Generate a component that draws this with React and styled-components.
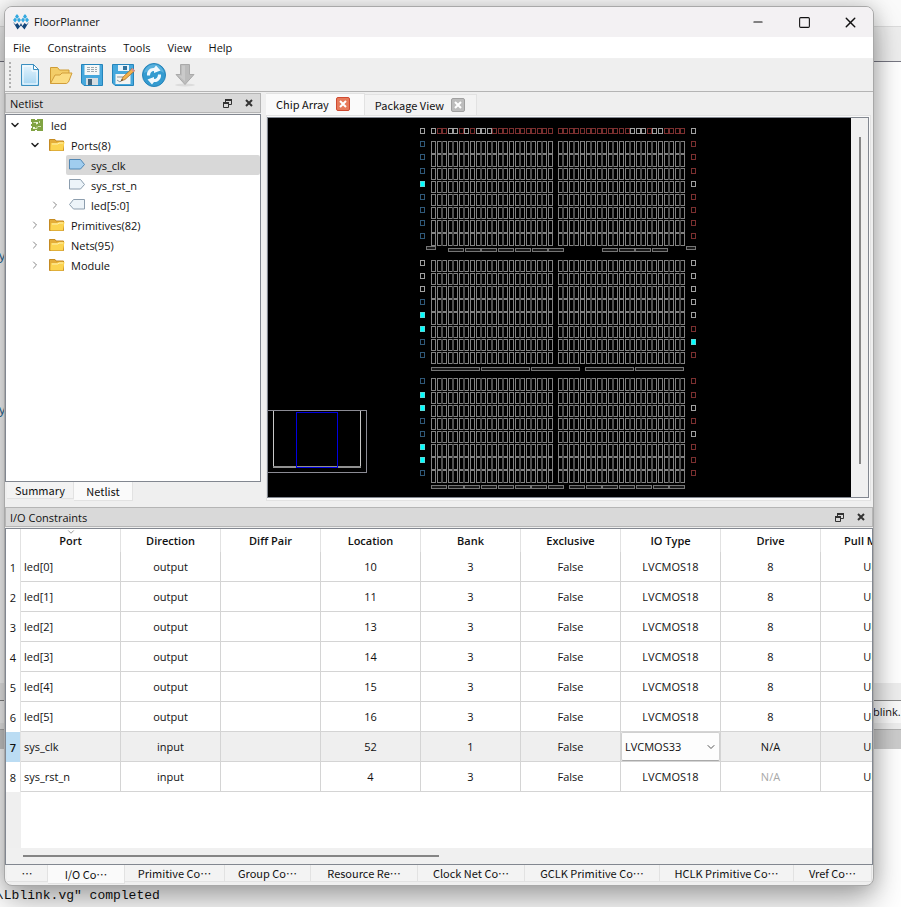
import React, { useState } from 'react'
import styled, { createGlobalStyle } from 'styled-components'
import { ChevronDown, ChevronRight, Minus, Square, X } from 'lucide-react'


const MENUS = ['File', 'Constraints', 'Tools', 'View', 'Help']

const TREE = [
  { label: 'led', depth: 0, open: true, icon: 'chip' },
  { label: 'Ports(8)', depth: 1, open: true, icon: 'folder' },
  { label: 'sys_clk', depth: 2, icon: 'input', filled: true, selected: true },
  { label: 'sys_rst_n', depth: 2, icon: 'input' },
  { label: 'led[5:0]', depth: 2, open: false, icon: 'output' },
  { label: 'Primitives(82)', depth: 1, open: false, icon: 'folder' },
  { label: 'Nets(95)', depth: 1, open: false, icon: 'folder' },
  { label: 'Module', depth: 1, open: false, icon: 'folder' },
]

const COLUMNS = ['Port', 'Direction', 'Diff Pair', 'Location', 'Bank', 'Exclusive', 'IO Type', 'Drive', 'Pull Mode']

const ROWS = [
  ['led[0]', 'output', '', '10', '3', 'False', 'LVCMOS18', '8', 'UP'],
  ['led[1]', 'output', '', '11', '3', 'False', 'LVCMOS18', '8', 'UP'],
  ['led[2]', 'output', '', '13', '3', 'False', 'LVCMOS18', '8', 'UP'],
  ['led[3]', 'output', '', '14', '3', 'False', 'LVCMOS18', '8', 'UP'],
  ['led[4]', 'output', '', '15', '3', 'False', 'LVCMOS18', '8', 'UP'],
  ['led[5]', 'output', '', '16', '3', 'False', 'LVCMOS18', '8', 'UP'],
  ['sys_clk', 'input', '', '52', '1', 'False', 'LVCMOS33', 'N/A', 'UP'],
  ['sys_rst_n', 'input', '', '4', '3', 'False', 'LVCMOS18', 'N/A', 'UP'],
]

// labels are elided, each one is drawn with a trailing ellipsis
const BOTTOM_TABS = [
  { label: '', width: 41 },
  { label: 'I/O Co', width: 77 },
  { label: 'Primitive Co', width: 100 },
  { label: 'Group Co', width: 86 },
  { label: 'Resource Re', width: 107 },
  { label: 'Clock Net Co', width: 107 },
  { label: 'GCLK Primitive Co', width: 135 },
  { label: 'HCLK Primitive Co', width: 134 },
  { label: 'Vref Co', width: 78 },
]

// device geometry, in canvas units
const COL_PITCH = 5.57
const ROW_PITCH = 13.15
const BLOCK_TOPS = [141.2, 259.8, 378.4]
const HALVES = [{ x: 431, cols: 22 }, { x: 557.7, cols: 23 }]

// g = free, r = reserved, b = bonded, c = placed
const PAD_COLORS = { g: '#a0a0a0', r: '#7a2f2f', b: '#2f5878', c: '#00ffff' }
const TOP_PADS = ['grrggrgrgggrrrrrrrrrrr', 'rrrrrrrrrrrrrgggrggrrrr']
const LEFT_PADS = ['bbbcbbbb', 'gggbccbb', 'bccbbccb']
const RIGHT_PADS = ['rrrgrrrr', 'gggggrcr', 'rrgrgrrr']

const BARS = [
  { x: 426, y: 246, w: 10, n: 1 },
  { x: 448, y: 248, w: 16, n: 7 },
  { x: 602, y: 248, w: 16, n: 4 },
  { x: 686, y: 246, w: 10, n: 1 },
  { x: 431, y: 367, w: 49, n: 3 },
  { x: 585, y: 367, w: 49, n: 2 },
  { x: 431, y: 485, w: 16, n: 8 },
  { x: 569, y: 485, w: 16, n: 7 },
]


const Pad = ({ x, y, type }) => (
  <rect
    x={x + 0.5}
    y={y + 0.5}
    width="4"
    height="5"
    fill={type === 'c' ? PAD_COLORS.c : '#000'}
    stroke={type === 'c' ? '#58d8d8' : PAD_COLORS[type]}
  />
)

const CellBlock = ({ left, cols, top }) => {
  const xs = Array.from({ length: cols }, (_, i) => Math.round(left + i * COL_PITCH))
  const ys = Array.from({ length: 8 }, (_, i) => top + i * ROW_PITCH)

  return (
    <g>
      {ys.map((y) => {
        const y0 = Math.round(y)
        const y1 = Math.round(y + 12.4)
        return xs.map((x, i) => (
          <g key={`${x}-${y0}`}>
            <rect x={x + 0.5} y={y0 + 0.5} width="4" height={y1 - y0 - 1} fill="none" stroke="#828282" />
            {/* cells that touch share a dimmer edge */}
            {xs[i - 1] === x - 5 && <rect x={x - 1} y={y0} width="2" height={y1 - y0} fill="#505050" />}
          </g>
        ))
      })}
    </g>
  )
}

const ChipDrawing = () => (
  <ChipSvg viewBox="268 118 583 379" role="img" aria-label="Chip array">
    {TOP_PADS.map((pads, h) =>
      pads.split('').map((type, i) => (
        <Pad key={`${h}-${i}`} x={Math.round(HALVES[h].x + i * COL_PITCH)} y={128} type={type} />
      ))
    )}
    <Pad x={420} y={128} type="g" />
    <Pad x={691} y={128} type="g" />
    {BLOCK_TOPS.map((top, b) => (
      <g key={top}>
        {HALVES.map(({ x, cols }) => <CellBlock key={x} left={x} cols={cols} top={top} />)}
        {LEFT_PADS[b].split('').map((type, i) => (
          <Pad key={i} x={420} y={Math.round(top + i * ROW_PITCH)} type={type} />
        ))}
        {RIGHT_PADS[b].split('').map((type, i) => (
          <Pad key={i} x={691} y={Math.round(top + i * ROW_PITCH)} type={type} />
        ))}
      </g>
    ))}
    {BARS.map(({ x, y, w, n }) =>
      Array.from({ length: n }, (_, i) => (
        <rect
          key={`${x}-${y}-${i}`}
          x={Math.round(x + i * (w > 16 ? 50.1 : 16.7)) + 0.5}
          y={y + 0.5}
          width={w - 1}
          height="3"
          fill="#181818"
          stroke="#757575"
        />
      ))
    )}
  </ChipSvg>
)

const Logo = () => (
  <svg width="16" height="16" viewBox="0 0 16 16">
    <path d="M4 0l2 2.5L4 5 2 2.500zM12 0l2 2.500L12 5l-2-2.500zM2 3.500l2 2.500-2 2.500L0 6zM6 3.500L8 6 6 8.500 4 6zM10 3.500L12 6l-2 2.500L8 6zM14 3.500L16 6l-2 2.500L12 6z" fill="#35a9e0" />
    <path d="M0 8l2.500 2.500L4.500 9l2 3 1.500-3 1.500 3 2-3 2 1.500L16 8l-4.500 7.500L8 11.500l-3.500 4z" fill="#12477c" />
  </svg>
)

const NewIcon = () => (
  <svg width="24" height="24" viewBox="0 0 24 24">
    <defs>
      <linearGradient id="paper" x1="0" y1="0" x2="0" y2="1">
        <stop offset="0" stopColor="#e6f4fd" />
        <stop offset="1" stopColor="#a5d5f2" />
      </linearGradient>
    </defs>
    <path d="M3.500 1.500h12l5 5v16h-17z" fill="url(#paper)" stroke="#3b8fc0" />
    <path d="M5 3h9v5h5v13H5z" fill="none" stroke="#f8fdff" />
    <path d="M15.500 1.500v5h5z" fill="#fff" stroke="#3b8fc0" />
  </svg>
)

const OpenIcon = () => (
  <svg width="24" height="24" viewBox="0 0 24 24">
    <path d="M1.500 20.500v-16h7l2 2.500h9.500v5" fill="#f3cd68" stroke="#cf9c35" />
    <path d="M1.500 20.500L6 12h5l2-2h10l-3.500 9-2 1.500z" fill="#fbdc82" stroke="#d19d3a" />
  </svg>
)

const SaveIcon = ({ edit }) => (
  <svg width="24" height="24" viewBox="0 0 24 24">
    <path d="M1.500 1.500h21v21H4l-2.500-2.500z" fill="#46a8dd" stroke="#2484bb" />
    {edit ? (
      <>
        <path d="M7 2h11v6H7z" fill="#e8f3fa" />
        <path d="M12 3h4v4h-4z" fill="#30739e" />
        <path d="M4.500 11h15v10h-15z" fill="#f4f4f2" />
        <path d="M6 14h6M6 17l3 2 3-3" fill="none" stroke="#89949a" />
        <path d="M10 18l2-4 9-8.500 2.500 2.500-9.500 8.500z" fill="#f3b24d" stroke="#9c6728" strokeWidth="0.700" />
        <path d="M20 6.500l1.500-1.500 2.500 2.500-1.500 1.500z" fill="#d98e8b" />
        <path d="M10 18l1-2 1 1z" fill="#333" />
      </>
    ) : (
      <>
        <path d="M4.500 2h15v10h-15z" fill="#f5f8f8" />
        <path d="M7 4.500h10M7 6.500h10M7 8.500h10" stroke="#9da9af" strokeDasharray="3 1" />
        <path d="M6 15h12v7H6z" fill="#d5dde1" />
        <path d="M8 16h4v6H8z" fill="#43637a" />
      </>
    )}
  </svg>
)

const RefreshIcon = () => (
  <svg width="24" height="24" viewBox="0 0 24 24">
    <circle cx="12" cy="12" r="11.500" fill="#349bd0" stroke="#2683b8" />
    <path d="M2 10C3 4 8 1.500 12 1.500S21 4 22 10c-6-4-12-4-20 0z" fill="#69bbe3" opacity="0.700" />
    <path d="M5 12.500C4.500 8 8 4.500 12 5l2-2.500 4.500 5L12 10V8c-2.500 0-4 2-4 4.500zM19 11.500c.5 4.500-3 8-7 7.500l-2 2.500-4.500-5L12 14v2c2.500 0 4-2 4-4.500z" fill="#f2f9fd" />
  </svg>
)

const DownIcon = () => (
  <svg width="24" height="24" viewBox="0 0 24 24">
    <ellipse cx="12" cy="22" rx="10" ry="1.500" fill="#dcdcdc" />
    <path d="M7.500 1.500h9v10H21L12 21.500 3 11.500h4.500z" fill="#bcbcbc" stroke="#aaa" />
    <path d="M9 2.500h3v16L5.500 12.500H9z" fill="#cacaca" />
  </svg>
)

const RestoreIcon = () => (
  <svg width="9" height="9" viewBox="0 0 9 9">
    <path d="M2.500 3V.5h6v5H6" fill="none" stroke="#333" />
    <path d="M2 1h7M0 4h6" stroke="#333" strokeWidth="2" />
    <path d="M.5 3.500h5v5h-5z" fill="none" stroke="#333" />
  </svg>
)

const CrossIcon = ({ color = '#333' }) => (
  <svg width="8" height="8" viewBox="0 0 8 8">
    <path d="M1 1l6 6M7 1L1 7" stroke={color} strokeWidth="2" />
  </svg>
)

const TreeIcon = ({ type, filled }) => {
  if (type === 'chip') {
    return (
      <svg width="16" height="16" viewBox="0 0 16 16">
        <path d="M2 2h4v1h2V2h6v12H8v-1H6v1H2v-3h1V9H2V7h1V5H2z" fill="#81a443" />
        <path d="M4.500 5.500h3v2M9 9.500h3M5 11.500h3v-2M10.500 4v2" fill="none" stroke="#d6e4b5" />
        <path d="M7 5h2v2H7zM4 10h2v2H4z" fill="#eef5dd" />
      </svg>
    )
  }
  if (type === 'folder') {
    return (
      <svg width="16" height="16" viewBox="0 0 16 16">
        <path d="M.5 13.500v-11H6l1 1.500h7.500v9.500z" fill="#e4ad38" stroke="#c58b22" />
        <path d="M2 6h6l1.500-1h6l-1.500 8.500H1.500z" fill="#fcd450" />
        <path d="M3 7h6l1-1h4" fill="none" stroke="#ffefac" />
      </svg>
    )
  }
  return (
    <svg width="16" height="16" viewBox="0 0 16 16">
      <path
        d={type === 'input' ? 'M.5 2.500h11l4 5-4 4.500H.5z' : 'M15.500 2.500h-11l-4 5 4 4.500h11z'}
        fill={filled ? '#a0cdef' : '#edf4f9'}
        stroke={filled ? '#4f86b4' : '#8d9eae'}
      />
    </svg>
  )
}

const DockTitle = ({ children }) => (
  <DockBar>
    <DockName>{children}</DockName>
    <DockButton type="button" aria-label={`Float ${children}`}><RestoreIcon /></DockButton>
    <DockButton type="button" aria-label={`Close ${children}`}><CrossIcon /></DockButton>
  </DockBar>
)

const IoTable = () => {
  const [ioType, setIoType] = useState('LVCMOS33')

  return (
    <Table>
      <colgroup>
        <NumberCol />
        {COLUMNS.map((name) => <DataCol key={name} />)}
      </colgroup>
      <thead>
        <tr>
          <HeadCell />
          {COLUMNS.map((name, i) => (
            <HeadCell key={name}>
              {i === 0 && <SortMark><ChevronDown size={10} strokeWidth={2} /></SortMark>}
              {name}
            </HeadCell>
          ))}
        </tr>
      </thead>
      <tbody>
        {ROWS.map((row, r) => {
          const selected = row[0] === 'sys_clk'
          return (
            <Row key={row[0]} $selected={selected}>
              <RowNumber scope="row" $selected={selected}>{r + 1}</RowNumber>
              {row.map((value, c) => (
                <Cell key={c} $left={c === 0} $dim={r === 7 && c === 7}>
                  {selected && c === 6 ? (
                    <SelectWrap>
                      <Select aria-label="IO Type" value={ioType} onChange={(e) => setIoType(e.target.value)}>
                        <option>LVCMOS33</option>
                        <option>LVCMOS18</option>
                      </Select>
                      <ChevronDown size={12} strokeWidth={2} />
                    </SelectWrap>
                  ) : value}
                </Cell>
              ))}
            </Row>
          )
        })}
      </tbody>
    </Table>
  )
}

const App = () => {
  return (
    <>
    <GlobalStyle />
    <Desktop>
      <Backdrop>
        <Band $height={26} $color="#fafafa" />
        <Band $height={35} $color="#eeeeee" $line="#dcdcdc" />
        <Band $height={622} $color="#ffffff" $line="#777783">
          <EditorText>
            <span>y</span>
            <span>ay</span>
          </EditorText>
        </Band>
        <Band $height={17} $color="#eeeeee" />
        <Band $height={23} $color="#fafafa" $line="#888888"><FileTab>blink.</FileTab></Band>
        <Band $height={6} $color="#eeeeee" />
        <Band $height={20} $color="#cccccc" $line="#b0b0b0" />
        <LogBand>\Lblink.vg" completed</LogBand>
      </Backdrop>

      <Window>
        <TitleBar>
          <Logo />
          <Title>FloorPlanner</Title>
          <WindowButton type="button" aria-label="Minimize"><Minus size={14} strokeWidth={2} /></WindowButton>
          <WindowButton type="button" aria-label="Maximize"><Square size={13} strokeWidth={2} /></WindowButton>
          <WindowButton type="button" aria-label="Close"><X size={17} strokeWidth={2} /></WindowButton>
        </TitleBar>

        <MenuBar>
          {MENUS.map((name) => <MenuButton key={name} type="button">{name}</MenuButton>)}
        </MenuBar>

        <ToolBar>
          <Grip />
          <ToolButton type="button" aria-label="New"><NewIcon /></ToolButton>
          <ToolButton type="button" aria-label="Open"><OpenIcon /></ToolButton>
          <ToolButton type="button" aria-label="Save"><SaveIcon /></ToolButton>
          <ToolButton type="button" aria-label="Save as"><SaveIcon edit /></ToolButton>
          <ToolButton type="button" aria-label="Reload"><RefreshIcon /></ToolButton>
          <ToolButton type="button" aria-label="Download" disabled><DownIcon /></ToolButton>
        </ToolBar>

        <UpperArea>
          <NetlistDock>
            <DockTitle>Netlist</DockTitle>
            <Tree>
              {TREE.map(({ label, depth, open, icon, filled, selected }) => (
                <TreeRow key={label} $depth={depth}>
                  <Twisty $open={open}>
                    {open === true && <ChevronDown size={12} strokeWidth={3} />}
                    {open === false && <ChevronRight size={12} strokeWidth={2} />}
                  </Twisty>
                  <TreeItem $selected={selected}>
                    <TreeIcon type={icon} filled={filled} />
                    <TreeLabel>{label}</TreeLabel>
                  </TreeItem>
                </TreeRow>
              ))}
            </Tree>
            <DockTabs>
              <BottomTab type="button" $width={67}>Summary</BottomTab>
              <BottomTab type="button" $width={59} $active>Netlist</BottomTab>
            </DockTabs>
          </NetlistDock>

          <Views>
            <ViewTabs>
              <ViewTab $active>
                <TabButton type="button">Chip Array</TabButton>
                <TabClose type="button" aria-label="Close Chip Array" $active><CrossIcon color="#fff" /></TabClose>
              </ViewTab>
              <ViewTab>
                <TabButton type="button">Package View</TabButton>
                <TabClose type="button" aria-label="Close Package View"><CrossIcon color="#fff" /></TabClose>
              </ViewTab>
            </ViewTabs>
            <ViewFrame>
              <Canvas>
                <ChipDrawing />
                <MiniMap width="99" height="63" viewBox="0 0 99 63" shapeRendering="crispEdges">
                  <path d="M0 .5h98.500v62H0" fill="#000" stroke="#8b8b94" />
                  <path d="M5 1h1v56H5zM92 1h1v56h-1z" fill="#c8c8c8" />
                  <path d="M5 56h88v2H5z" fill="#909090" />
                  <path d="M28.500 2.500h41v55h-41z" fill="none" stroke="#0000e0" />
                </MiniMap>
              </Canvas>
              <VerticalScroll><VerticalThumb /></VerticalScroll>
            </ViewFrame>
          </Views>
        </UpperArea>

        <LowerDock>
          <DockTitle>I/O Constraints</DockTitle>
          <TableFrame>
            <TableView>
              <IoTable />
              <Gutter />
            </TableView>
            <HorizontalScroll><HorizontalThumb /></HorizontalScroll>
          </TableFrame>
          <DockTabs>
            {BOTTOM_TABS.map(({ label, width }, i) => (
              <BottomTab key={label} type="button" $width={width} $active={i === 1}>
                {label}<Ellipsis>…</Ellipsis>
              </BottomTab>
            ))}
          </DockTabs>
        </LowerDock>
      </Window>
    </Desktop>
    </>
  )
}

export default App


const GlobalStyle = createGlobalStyle`
  * {
    box-sizing: border-box;
  }

  body {
    margin: 0;
    font-family: "Open Sans", "Noto Sans", sans-serif;
    font-size: 11px;
    line-height: 16px;
    color: #111;
  }

  button, select {
    font: inherit;
    color: inherit;
    margin: 0;
    padding: 0;
    border: 0;
    background: none;
  }

  svg {
    display: block;
    flex-shrink: 0;
  }
`

const Desktop = styled.div`
  position: relative;
  display: flex;
  min-height: 100vh;
  padding: 6px 27px 21px 4px;
  overflow: hidden;
`

const Backdrop = styled.div`
  position: absolute;
  inset: 0;
  display: flex;
  flex-direction: column;
`

const Band = styled.div`
  display: flex;
  justify-content: flex-end;
  align-items: center;
  flex-shrink: 0;
  height: ${({ $height }) => $height}px;
  background: ${({ $color }) => $color};
  border-top: ${({ $line }) => ($line ? `1px solid ${$line}` : 'none')};
`

const EditorText = styled.div`
  display: flex;
  flex-direction: column;
  align-self: flex-start;
  align-items: flex-end;
  gap: 138px;
  width: 6px;
  margin: 187px auto 0 0;
  color: #2a6a94;
  font-family: "Liberation Mono", monospace;
  font-size: 13px;
`

const FileTab = styled.span`
  width: 28px;
`

const LogBand = styled.div`
  display: flex;
  flex: 1;
  align-items: flex-end;
  padding-bottom: 3px;
  background: #fff;
  font-family: "Liberation Mono", monospace;
  font-size: 13px;
  text-indent: -4px;
`

const Window = styled.main`
  position: relative;
  display: flex;
  flex-direction: column;
  flex: 1;
  min-width: 0;
  border: 1px solid #a8a8a8;
  border-radius: 8px;
  background: #efefef;
  box-shadow: 0 0 20px rgba(0, 0, 0, 0.2), 0 16px 32px rgba(0, 0, 0, 0.3);
  overflow: hidden;
`

const TitleBar = styled.header`
  display: flex;
  align-items: center;
  height: 30px;
  padding-left: 8px;
  background: #f3f1f3;
`

const Title = styled.h1`
  flex: 1;
  margin: 0 0 0 5px;
  font-size: 11px;
  font-weight: 400;
`

const WindowButton = styled.button`
  display: flex;
  justify-content: center;
  align-items: center;
  width: 46px;
  height: 30px;
`

const MenuBar = styled.nav`
  display: flex;
  gap: 17px;
  height: 22px;
  padding: 0 8px;
  background: #fff;
  border-bottom: 1px solid #f0f0f0;
`

const MenuButton = styled.button`
  height: 21px;
`

const ToolBar = styled.div`
  display: flex;
  align-items: center;
  height: 33px;
  padding-left: 4px;
  border-bottom: 1px solid #b4b4b4;
`

const Grip = styled.div`
  width: 2px;
  height: 26px;
  margin-right: 3px;
  background: repeating-linear-gradient(#b0b0b0 0 2px, transparent 2px 4px);
`

const ToolButton = styled.button`
  display: flex;
  justify-content: center;
  align-items: center;
  width: 31px;
  height: 30px;
`

const UpperArea = styled.section`
  display: flex;
  gap: 5px;
  padding: 1px 2px 6px 0;
`

const NetlistDock = styled.aside`
  display: flex;
  flex-direction: column;
  flex: 0 0 256px;
`

const DockBar = styled.div`
  display: flex;
  align-items: center;
  flex-shrink: 0;
  height: 20px;
  margin-bottom: 1px;
  padding: 0 1px 0 4px;
  background: #d9d9d9;
  border: 1px solid #b5b5b5;
`

const DockName = styled.span`
  flex: 1;
  padding-top: 1px;
`

const DockButton = styled.button`
  display: flex;
  justify-content: center;
  align-items: center;
  width: 21px;
  height: 18px;
`

const Tree = styled.ul`
  flex: 1;
  margin: 0;
  padding: 0;
  list-style: none;
  background: #fff;
  border: 1px solid #828790;
`

const TreeRow = styled.li`
  display: flex;
  height: 20px;
  padding-left: ${({ $depth }) => $depth * 20}px;
`

const Twisty = styled.span`
  display: flex;
  align-items: center;
  width: 20px;
  padding-left: 3px;
  color: ${({ $open }) => ($open ? '#222' : '#888')};
`

const TreeItem = styled.span`
  display: flex;
  flex: 1;
  align-items: center;
  gap: 6px;
  padding-left: 3px;
  border-radius: 2px;
  background: ${({ $selected }) => ($selected ? '#d8d8d8' : 'transparent')};
`

const TreeLabel = styled.span`
  padding-top: 2px;
`

const DockTabs = styled.div`
  display: flex;
  align-items: flex-start;
  flex-shrink: 0;
  padding-left: 2px;
  font-family: "Noto Sans CJK JP", sans-serif;
`

const BottomTab = styled.button`
  flex-shrink: 0;
  width: ${({ $width }) => $width}px;
  height: ${({ $active }) => ($active ? 19 : 17)}px;
  background: ${({ $active }) => ($active ? '#fafafa' : '#f3f3f3')};
  border: 1px solid #e2e2e2;
  border-width: 0 1px 1px 0;
  line-height: 16px;
  white-space: nowrap;
`

/* inline-block keeps the dots out of the latin run, so they sit mid-height */
const Ellipsis = styled.span`
  display: inline-block;
`

const Views = styled.section`
  display: flex;
  flex-direction: column;
  flex: 1;
  min-width: 0;
`

const ViewTabs = styled.div`
  display: flex;
  align-items: flex-end;
  height: 22px;
  font-family: "Noto Sans CJK JP", sans-serif;
`

const ViewTab = styled.div`
  display: flex;
  align-items: center;
  gap: 7px;
  height: ${({ $active }) => ($active ? 22 : 21)}px;
  padding: 0 ${({ $active }) => ($active ? '14px 2px' : '11px 0')} 10px;
  background: ${({ $active }) => ($active ? '#fafafa' : '#f3f3f3')};
  border: 1px solid #e2e2e2;
  border-width: 1px 1px 0 0;
`

const TabButton = styled.button`
  white-space: nowrap;
`

const TabClose = styled.button`
  display: flex;
  justify-content: center;
  align-items: center;
  width: 14px;
  height: 14px;
  border: 1px solid ${({ $active }) => ($active ? '#cf4a31' : '#a0a0a0')};
  border-radius: 2px;
  background: ${({ $active }) => ($active ? '#e67a5b' : '#bdbdbd')};
`

const ViewFrame = styled.div`
  display: flex;
  padding: 1px 1px 2px 0;
  border: 1px solid #e2e2e2;
  background: #fafafa;
`

const Canvas = styled.div`
  position: relative;
  flex: 1;
  min-width: 0;
  background: #000;
  border: 1px solid #828790;
  border-right: 0;
`

const ChipSvg = styled.svg`
  width: 100%;
`

const MiniMap = styled.svg`
  position: absolute;
  left: 0;
  bottom: 24px;
`

const VerticalScroll = styled.div`
  display: flex;
  justify-content: center;
  width: 18px;
  padding: 19px 0 33px;
  background: #f0f0f0;
  border: 1px solid #828790;
  border-left: 0;
`

const VerticalThumb = styled.div`
  width: 2px;
  background: #858585;
`

const LowerDock = styled.section`
  display: flex;
  flex-direction: column;
  flex: 1;
  padding-bottom: 1px;
`

const TableFrame = styled.div`
  display: flex;
  flex-direction: column;
  flex: 1;
  border: 1px solid #828790;
  background: #fff;
`

const TableView = styled.div`
  display: flex;
  flex-direction: column;
  flex: 1;
  overflow: hidden;
`

const Table = styled.table`
  width: 915px;
  flex-shrink: 0;
  table-layout: fixed;
  border-collapse: separate;
  border-spacing: 0;
`

const NumberCol = styled.col`
  width: 15px;
`

const DataCol = styled.col`
  width: 100px;
`

const HeadCell = styled.th`
  position: relative;
  height: 23px;
  padding: 0;
  border-right: 1px solid #e2e2e2;
  font-weight: 600;
`

const SortMark = styled.span`
  position: absolute;
  top: -2px;
  left: 45px;
  color: #888;
`

const Row = styled.tr`
  background: ${({ $selected }) => ($selected ? '#efefef' : '#fff')};
`

const RowNumber = styled.th`
  padding: 1px 0 0;
  border-right: 1px solid #e2e2e2;
  background: ${({ $selected }) => ($selected ? '#bbdcf3' : '#fff')};
  font-weight: ${({ $selected }) => ($selected ? 600 : 400)};
`

const Cell = styled.td`
  height: 30px;
  padding: 0 ${({ $left }) => ($left ? 3 : 0)}px;
  border-right: 1px solid #d4d4d4;
  border-bottom: 1px solid #d4d4d4;
  color: ${({ $dim }) => ($dim ? '#a8a8a8' : 'inherit')};
  text-align: ${({ $left }) => ($left ? 'left' : 'center')};
`

const SelectWrap = styled.div`
  position: relative;

  svg {
    position: absolute;
    top: 9px;
    right: 3px;
    color: #555;
    pointer-events: none;
  }
`

const Select = styled.select`
  display: block;
  width: 100%;
  height: 29px;
  padding-left: 3px;
  appearance: none;
  background: #fdfdfd;
  border: 1px solid #d0d0d0;
  border-bottom-color: #aaa;
  border-radius: 2px;
`

const Gutter = styled.div`
  flex: 1;
  width: 15px;
  background: #efefef;
`

const HorizontalScroll = styled.div`
  flex-shrink: 0;
  height: 16px;
  padding: 7px 17px;
  background: #f0f0f0;
`

const HorizontalThumb = styled.div`
  width: 50%;
  height: 2px;
  background: #858585;
`
